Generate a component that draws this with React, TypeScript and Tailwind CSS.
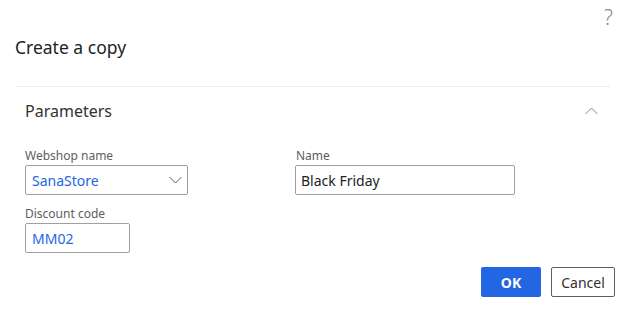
function Chevron({ up = false, className = '' }: { up?: boolean; className?: string }) {
    return (
        <svg width="13" height="8" viewBox="0 0 13 8" fill="none" className={className}>
            <polyline
                points={up ? '0.5,7 6.5,1 12.5,7' : '0.5,1 6.5,7 12.5,1'}
                stroke="currentColor"
                strokeWidth="1"
            />
        </svg>
    );
}

export default function App() {
    return (
        <div className="w-[625px] h-[310px] bg-white relative text-[#323130] font-['Segoe_UI','Noto_Sans',sans-serif] overflow-hidden">
            <span className="absolute right-[12px] top-[7px] text-[21px] font-light text-[#8a8886] leading-none">?</span>
            <div className="pt-[35px] pl-[15px] pr-[10px]">
                <h1 className="text-[17.5px] leading-[24px] text-[#201f1e]">Create a copy</h1>
                <div className="mt-[27px] h-px bg-[#edebe9] mr-[5px]" />
                <div className="flex items-center justify-between pl-[10px] pr-[17px] mt-[13px]">
                    <h2 className="text-[16px] leading-[22px]">Parameters</h2>
                    <Chevron up className="text-[#8a8886]" />
                </div>
                <div className="pl-[10px] mt-[26px] grid grid-cols-[270px_220px] gap-y-[11px]">
                    <div>
                        <label className="block text-[12px] leading-[16px] text-[#605e5c] mb-[1px]">Webshop name</label>
                        <div className="w-[163px] h-[30px] border border-[#a19f9d] rounded-[2px] flex items-center justify-between pl-[6px] pr-[5px]">
                            <span className="text-[14px] text-[#2266e3]">SanaStore</span>
                            <Chevron className="text-[#605e5c]" />
                        </div>
                    </div>
                    <div>
                        <label className="block text-[12px] leading-[16px] text-[#605e5c] mb-[1px] pl-[1px]">Name</label>
                        <div className="w-[220px] h-[30px] border border-[#a19f9d] rounded-[2px] flex items-center pl-[5px]">
                            <span className="text-[14px] text-[#201f1e]">Black Friday</span>
                        </div>
                    </div>
                    <div>
                        <label className="block text-[12px] leading-[16px] text-[#605e5c] mb-[1px]">Discount code</label>
                        <div className="w-[105px] h-[30px] border border-[#a19f9d] rounded-[2px] flex items-center pl-[6px]">
                            <span className="text-[14px] text-[#2266e3]">MM02</span>
                        </div>
                    </div>
                </div>
                <div className="flex justify-end gap-[10px] mt-[14px]">
                    <button className="w-[60px] h-[30px] bg-[#2266e3] text-white text-[14px] font-bold rounded-[2px]">OK</button>
                    <button className="w-[64px] h-[30px] border border-[#605e5c] text-[14px] text-[#323130] rounded-[2px]">Cancel</button>
                </div>
            </div>
        </div>
    );
}
